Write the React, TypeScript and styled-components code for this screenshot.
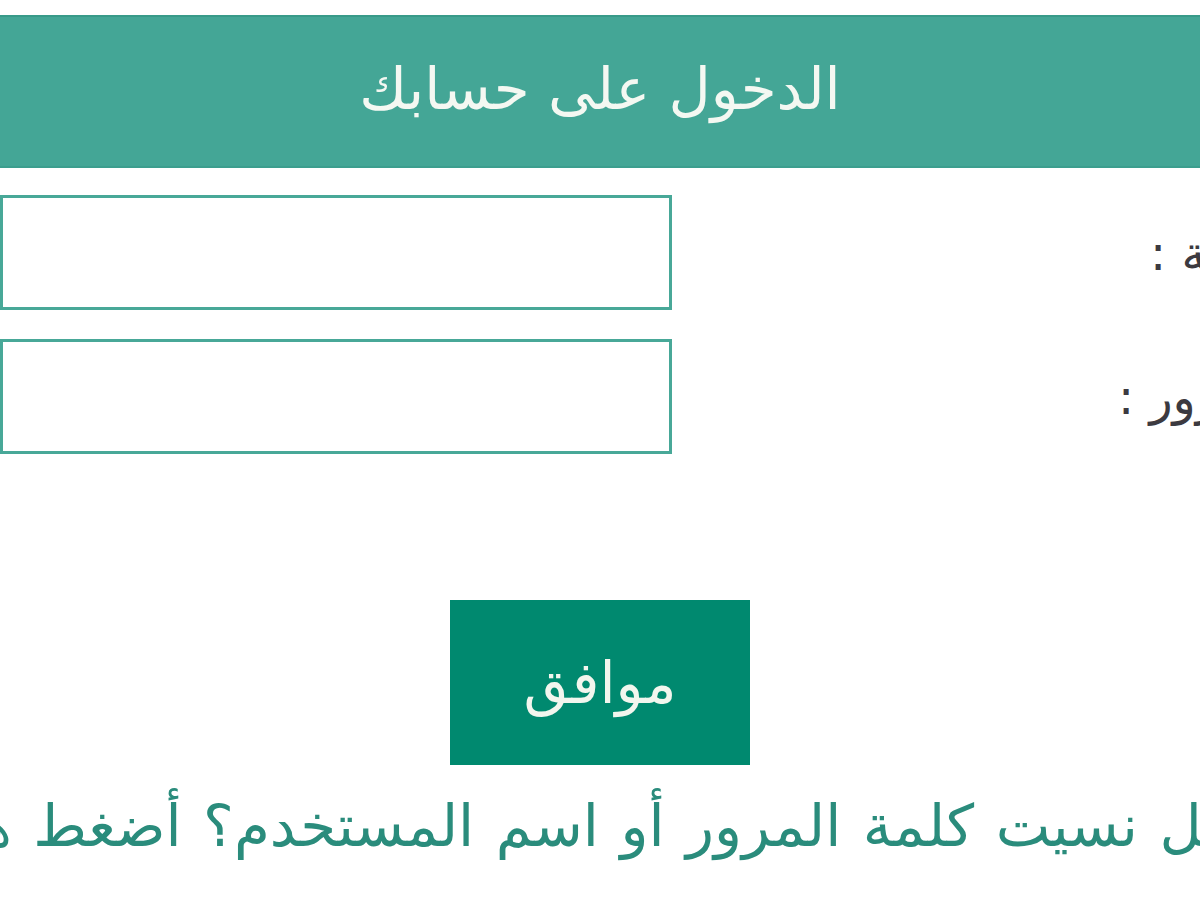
import React from "react";
import styled, { createGlobalStyle } from "styled-components";

const GlobalStyle = createGlobalStyle`
  html, body {
    margin: 0;
    padding: 0;
    background: #ffffff;
    overflow: hidden;
  }
  * { box-sizing: border-box; }
`;

const Page = styled.div`
  width: 1200px;
  height: 900px;
  overflow: hidden;
  padding-top: 15px;
  font-family: "DejaVu Sans", "Noto Sans", sans-serif;
  background: #ffffff;
`;

const Header = styled.header`
  height: 153px;
  background: #44a696;
  border-top: 2px solid #389a89;
  border-bottom: 2px solid #3c9e8e;
  display: flex;
  align-items: center;
  justify-content: center;
  padding-bottom: 6px;
`;

const Title = styled.h1`
  margin: 0;
  direction: rtl;
  font-size: 58px;
  font-weight: normal;
  color: #f4f8f2;
  line-height: 1;
`;

const Form = styled.form`
  display: flex;
  flex-direction: column;
  gap: 29px;
  margin-top: 27px;
`;

const Row = styled.div`
  display: grid;
  grid-template-columns: 672px 1fr;
  align-items: center;
  height: 115px;
`;

const Field = styled.input`
  width: 100%;
  height: 100%;
  border: 3px solid #48a898;
  background: #ffffff;
  margin: 0;
  padding: 0 16px;
  outline: none;
`;

const Label = styled.label<{ $offset: number }>`
  justify-self: start;
  margin-left: ${(p) => p.$offset}px;
  direction: rtl;
  white-space: nowrap;
  font-size: 48px;
  color: #3c3a40;
  line-height: 1;
`;

const Actions = styled.div`
  display: flex;
  justify-content: center;
  margin-top: 146px;
`;

const Submit = styled.button`
  width: 300px;
  height: 165px;
  background: #00896f;
  border: none;
  color: #f2f6ee;
  font-family: inherit;
  font-size: 58px;
  direction: rtl;
  cursor: pointer;
`;

const Forgot = styled.a`
  display: block;
  margin-top: 30px;
  margin-left: -60px;
  width: 1300px;
  text-align: center;
  direction: rtl;
  white-space: nowrap;
  font-size: 58px;
  word-spacing: 3px;
  color: #2a8c7c;
  text-decoration: none;
  line-height: 1.1;
`;

export default function App() {
  return (
    <>
      <GlobalStyle />
      <Page>
        <Header>
          <Title>الدخول على حسابك</Title>
        </Header>
        <Form onSubmit={(e) => e.preventDefault()}>
          <Row>
            <Field type="text" aria-label="رقم الهوية" />
            <Label $offset={478}>رقم الهوية :</Label>
          </Row>
          <Row>
            <Field type="password" aria-label="كلمة المرور" />
            <Label $offset={446}>كلمة المرور :</Label>
          </Row>
        </Form>
        <Actions>
          <Submit type="button">موافق</Submit>
        </Actions>
        <Forgot href="#">هل نسيت كلمة المرور أو اسم المستخدم؟ أضغط هنا</Forgot>
      </Page>
    </>
  );
}
